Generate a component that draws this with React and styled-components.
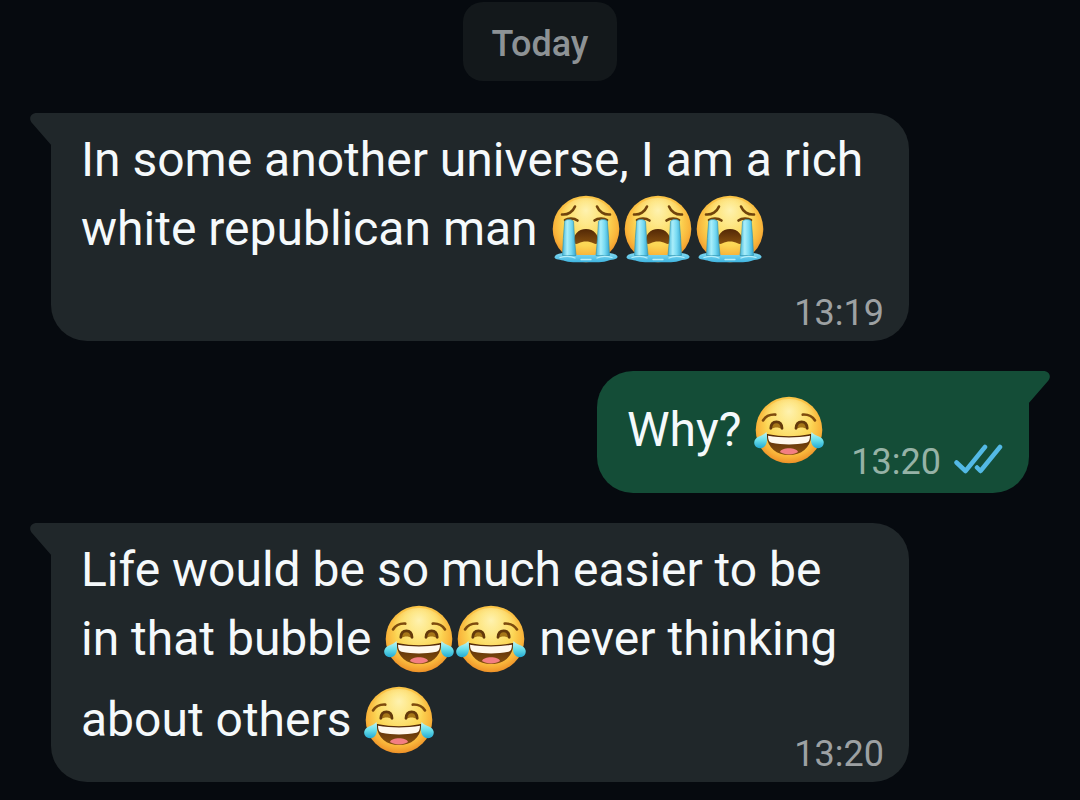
import React from "react";
import styled, { createGlobalStyle } from "styled-components";

const messages = [
  {
    id: 1,
    lines: ["In some another universe, I am a rich", "white republican man 😭😭😭"],
    time: "13:19",
  },
  {
    id: 2,
    sent: true,
    lines: [],
    lastLine: "Why? 😂",
    time: "13:20",
  },
  {
    id: 3,
    lines: ["Life would be so much easier to be", "in that bubble 😂😂 never thinking"],
    lastLine: "about others 😂",
    time: "13:20",
  },
];

export default function App() {
  return (
    <>
      <GlobalStyle />
      <EmojiDefs />
      <Chat>
        <DateChip>Today</DateChip>
        <MessageList>
          {messages.map((message) => (
            <Message key={message.id} {...message} />
          ))}
        </MessageList>
      </Chat>
    </>
  );
}

function Message({ sent, lines, lastLine, time }) {
  return (
    <Bubble $sent={sent}>
      <Tail viewBox="0 0 22 33" $sent={sent} aria-hidden="true">
        <path d="M7 0H22V33L2 10C-1.500 6 0 0 7 0Z" />
      </Tail>
      {lines.map((line) => (
        <Line key={line}>
          <RichText text={line} />
        </Line>
      ))}
      <Foot $sent={sent} $timeOnly={!lastLine}>
        {lastLine && (
          <Line>
            <RichText text={lastLine} />
          </Line>
        )}
        <Meta $sent={sent}>
          <time>{time}</time>
          {sent && <ReadTicks />}
        </Meta>
      </Foot>
    </Bubble>
  );
}

function RichText({ text }) {
  return text.split(/(😭|😂)/u).map((part, i) => {
    if (part === "😭") return <Sob key={i} />;
    if (part === "😂") return <Joy key={i} />;
    return part;
  });
}

function ReadTicks() {
  return (
    <Ticks viewBox="0 0 50 36" role="img" aria-label="Read">
      <path d="M3.500 18.500 12.500 27 32 3" />
      <path d="M24 23.500 27.500 27 47 3" />
    </Ticks>
  );
}

function EmojiDefs() {
  return (
    <Defs aria-hidden="true">
      <defs>
        <radialGradient id="face" cx="0.5" cy="0.42" r="0.6">
          <stop offset="0" stopColor="#fde070" />
          <stop offset="0.55" stopColor="#fcd654" />
          <stop offset="0.8" stopColor="#f9b43a" />
          <stop offset="1" stopColor="#ec8a24" />
        </radialGradient>
        <radialGradient id="shine" cx="0.5" cy="0.2" r="0.45">
          <stop offset="0" stopColor="#fff8c4" stopOpacity="0.8" />
          <stop offset="1" stopColor="#fff3a0" stopOpacity="0" />
        </radialGradient>
        <linearGradient id="mouth" x1="0" y1="0" x2="0" y2="1">
          <stop offset="0" stopColor="#532806" />
          <stop offset="1" stopColor="#86500f" />
        </linearGradient>
        <linearGradient id="stream" x1="0" y1="0" x2="1" y2="0">
          <stop offset="0" stopColor="#45b5d8" />
          <stop offset="0.35" stopColor="#a9eefa" />
          <stop offset="0.65" stopColor="#76d9f2" />
          <stop offset="1" stopColor="#36a6cf" />
        </linearGradient>
        <linearGradient id="puddle" x1="0" y1="0" x2="0" y2="1">
          <stop offset="0" stopColor="#86dcf4" />
          <stop offset="1" stopColor="#3fb4df" />
        </linearGradient>
        <linearGradient id="tear" x1="0" y1="0" x2="0" y2="1">
          <stop offset="0" stopColor="#c3f5f5" />
          <stop offset="0.5" stopColor="#6adfe9" />
          <stop offset="1" stopColor="#23a9d2" />
        </linearGradient>
      </defs>
    </Defs>
  );
}

function Sob() {
  return (
    <Emoji viewBox="0 0 72 72" role="img" aria-label="Loudly crying face">
      <circle cx="36" cy="36" r="33.300" fill="url(#face)" />
      <circle cx="36" cy="36" r="31" fill="url(#shine)" />
      <g fill="none" stroke="#70430c" strokeWidth="2.600" strokeLinecap="round">
        <path d="M12 21.500C18 22 23 18.500 25 13.500" />
        <path d="M60 21.500C54 22 49 18.500 47 13.500" />
        <path d="M15 27C18 25 24 24.800 27.500 27.500" />
        <path d="M57 27C54 25 48 24.800 44.500 27.500" />
      </g>
      <path
        d="M24.300 49C23 42 28 36 36 36S49 42 47.700 49C47 51.500 45.500 51.500 43.500 50.300C39 48 33 48 28.500 50.300C26.500 51.500 25 51.500 24.300 49Z"
        fill="url(#mouth)"
      />
      <path
        d="M4.500 64C6 60.500 10 61 14 59.500C21 59 24 58.500 27 62H45C48 58.500 51 59 58 59.500C62 61 66 60.500 67.500 63.500C68 67 61 66.500 57 68C50 70 45 69 36 69.300C27 69 22 70 15 68C11 66.500 4 67 4.500 64Z"
        fill="url(#puddle)"
      />
      <g stroke="#2b91ad" strokeWidth="0.600">
        <path d="M14.700 28C17 26 21.500 26 23.500 28.500C24.300 40 24.700 51 26 62.500H12.500C13 51 13.500 40 14.700 28Z" fill="url(#stream)" />
        <path d="M57.300 28C55 26 50.500 26 48.500 28.500C47.700 40 47.300 51 46 62.500H59.500C59 51 58.500 40 57.300 28Z" fill="url(#stream)" />
      </g>
      <g fill="none" stroke="#b5eefa" strokeWidth="1.300" strokeLinecap="round">
        <path d="M10 64.500C15 63 21 63 25 65" />
        <path d="M47 65C51 63 57 63 62 64.500" />
        <path d="M31 66.500H41" />
      </g>
    </Emoji>
  );
}

function Joy() {
  return (
    <Emoji viewBox="0 0 72 72" role="img" aria-label="Face with tears of joy">
      <circle cx="36" cy="36" r="33.300" fill="url(#face)" />
      <circle cx="36" cy="36" r="31" fill="url(#shine)" />
      <g fill="none" stroke="#7d4b0e" strokeWidth="2.600" strokeLinecap="round">
        <path d="M10 26.500C12.500 22.500 17 20.300 22.300 20.600" />
        <path d="M62 26.500C59.500 22.500 55 20.300 49.700 20.600" />
      </g>
      <g fill="#a67618">
        <path d="M18.500 35C18.500 30 20.500 28.500 23.500 28.500S28.500 30 28.500 35C26 33 21 33 18.500 35Z" />
        <path d="M43.500 35C43.500 30 45.500 28.500 48.500 28.500S53.500 30 53.500 35C51 33 46 33 43.500 35Z" />
      </g>
      <g fill="none" stroke="#63390b" strokeWidth="2.800" strokeLinecap="round">
        <path d="M17.800 34.300C18 30 20 27.800 23.400 27.800S28.800 30 29 34.300" />
        <path d="M43 34.300C43.200 30 45.200 27.800 48.600 27.800S54 30 54.200 34.300" />
      </g>
      <path
        d="M13.500 42C13.300 40.300 14 39.800 15.500 40.200C28 42.800 44 42.800 56.500 40.200C58 39.800 58.700 40.300 58.500 42C57 54 48.500 61 36 61S15 54 13.500 42Z"
        fill="url(#mouth)"
      />
      <path
        d="M15 41.700C28 44 44 44 57 41.700C57 45.500 56 48 53.500 48.800C42 51 30 51 18.500 48.800C16 48 15 45.500 15 41.700Z"
        fill="#fff8ed"
      />
      <path d="M27 58C28.500 53 43.500 53 45 58C40.500 61.300 31.500 61.300 27 58Z" fill="#f37f83" />
      <path d="M13.500 38C14.500 44 14.500 49 12 52C9 55.300 4 54.700 2 51.500C0 48 2 44.500 5.500 42.800C9 41.500 11.500 40 13.500 38Z" fill="url(#tear)" />
      <path d="M58.500 38C57.500 44 57.500 49 60 52C63 55.300 68 54.700 70 51.500C72 48 70 44.500 66.500 42.800C63 41.500 60.500 40 58.500 38Z" fill="url(#tear)" />
    </Emoji>
  );
}

const GlobalStyle = createGlobalStyle`
  * {
    box-sizing: border-box;
  }

  body {
    margin: 0;
    background: #060a0f;
    font-family: Roboto, "Liberation Sans", sans-serif;
  }
`;

const Chat = styled.main`
  display: flex;
  flex-direction: column;
  padding: 2px 51px 16px;
`;

const DateChip = styled.h1`
  align-self: center;
  margin: 0 0 32px;
  padding: 21px 29px 16px;
  border-radius: 20px;
  background: #13181b;
  color: #8d9295;
  font-size: 36px;
  font-weight: 500;
  line-height: 42px;
`;

const MessageList = styled.ol`
  display: flex;
  flex-direction: column;
  gap: 30px;
  margin: 0;
  padding: 0;
  list-style: none;
`;

const Bubble = styled.li`
  position: relative;
  align-self: ${({ $sent }) => ($sent ? "flex-end" : "flex-start")};
  width: ${({ $sent }) => ($sent ? "auto" : "calc(100% - 120px)")};
  padding: ${({ $sent }) => ($sent ? "12px 26px 10px 30px" : "12px 25px 7px 30px")};
  border-radius: ${({ $sent }) => ($sent ? "36px 0 36px 36px" : "0 36px 36px 36px")};
  background: ${({ $sent }) => ($sent ? "#144d37" : "#20272a")};
  color: #f5f9fb;
`;

const Tail = styled.svg`
  position: absolute;
  top: 0;
  ${({ $sent }) => ($sent ? "right: -21px; transform: scaleX(-1);" : "left: -21px;")}
  width: 22px;
  height: 33px;
  fill: ${({ $sent }) => ($sent ? "#144d37" : "#20272a")};
`;

const Line = styled.p`
  margin: 0;
  font-size: 48px;
  line-height: 69px;
  white-space: nowrap;
`;

const Foot = styled.div`
  display: flex;
  justify-content: ${({ $timeOnly }) => ($timeOnly ? "flex-end" : "space-between")};
  gap: 26px;
  min-height: ${({ $sent, $timeOnly }) => ($timeOnly ? "71px" : $sent ? "100px" : "102px")};

  ${Line} {
    padding-top: 12px;
  }
`;

const Meta = styled.div`
  display: flex;
  align-self: flex-end;
  align-items: center;
  gap: 12px;
  color: ${({ $sent }) => ($sent ? "#96b2a6" : "#9da1a3")};
  font-size: 36px;
  line-height: 42px;
`;

const Ticks = styled.svg`
  width: 50px;
  height: 36px;
  fill: none;
  stroke: #53b9e5;
  stroke-width: 4.5;
  stroke-linecap: round;
  stroke-linejoin: round;
`;

const Emoji = styled.svg`
  width: 72px;
  height: 72px;
  margin: -6px 0;
  vertical-align: -14px;
`;

const Defs = styled.svg`
  position: absolute;
  width: 0;
  height: 0;
`;
